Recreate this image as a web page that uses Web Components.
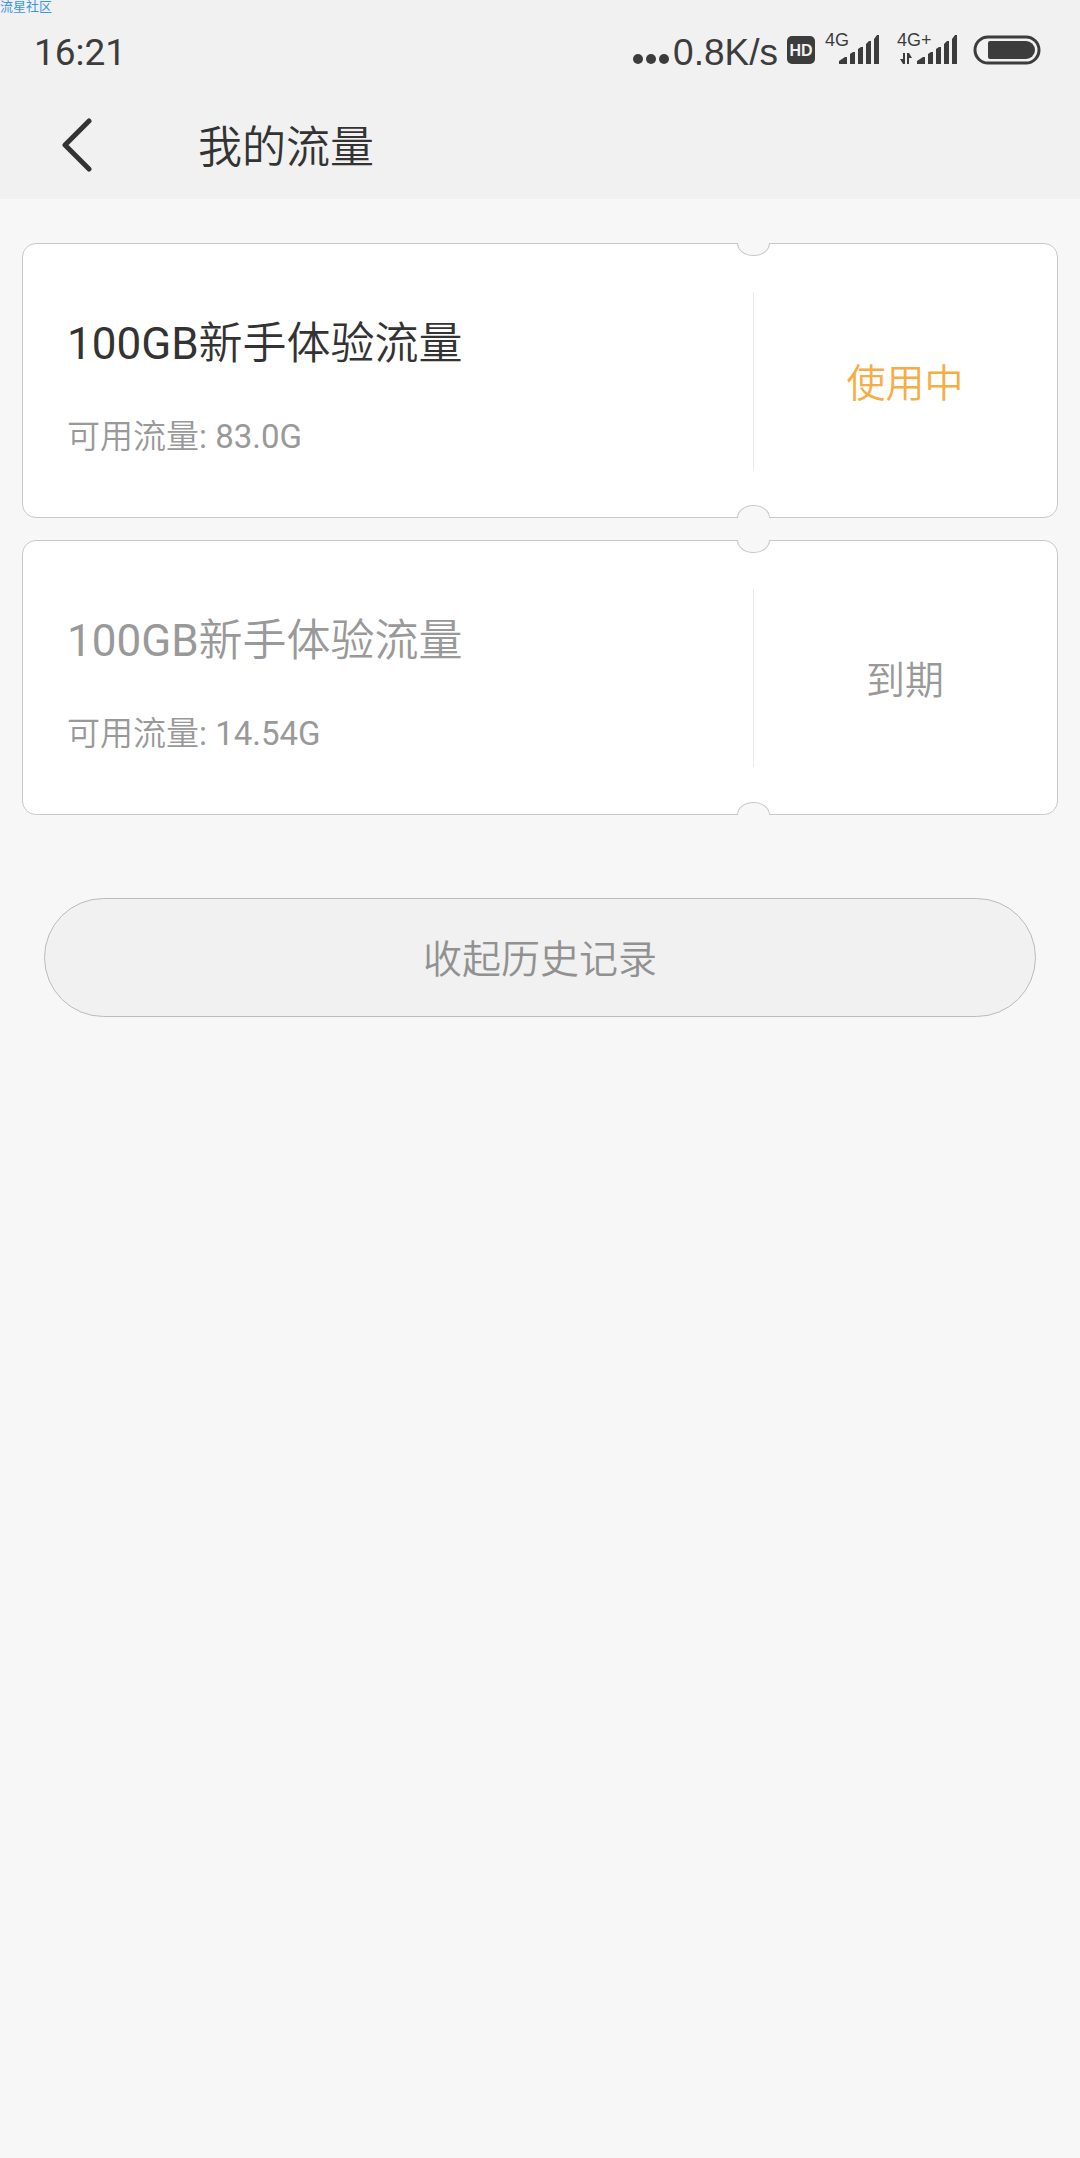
<!DOCTYPE html>
<html lang="zh-CN">
<head>
<meta charset="utf-8">
<meta name="viewport" content="width=device-width, initial-scale=1">
<title>我的流量</title>
<style>
    body {
        margin: 0;
        min-height: 100vh;
        background: #f7f7f7;
        color: #333;
        font-family: Roboto, "Noto Sans CJK SC", sans-serif;
    }
</style>
</head>
<body>
<traffic-page>
    <span slot="mark">流星社区</span>
    <status-bar slot="status" time="16:21" speed="0.8K/s"></status-bar>
    <nav-bar slot="nav">我的流量</nav-bar>
    <traffic-ticket size="100GB" amount="83.0G" state="active">新手体验流量<span slot="status">使用中</span></traffic-ticket>
    <traffic-ticket size="100GB" amount="14.54G" state="expired">新手体验流量<span slot="status">到期</span></traffic-ticket>
    <history-button slot="footer">收起历史记录</history-button>
</traffic-page>

<script>
class TrafficPage extends HTMLElement {

    constructor(){
        super();
        this.shadowObj = this.attachShadow({mode:'open'});
        this.shadowObj.innerHTML = `
            <header>
                <div class="mark"><slot name="mark"></slot></div>
                <slot name="status"></slot>
                <slot name="nav"></slot>
            </header>
            <main>
                <div class="list"><slot></slot></div>
                <slot name="footer"></slot>
            </main>
            ${this.getStyle()}
        `;
    }

    getStyle(){
        return `
        <style>
            :host {
                display: block;
                position: relative;
            }
            header {
                background: #f1f1f1;
            }
            .mark {
                position: absolute;
                top: 0;
                left: 0;
                color: #3d94e6;
                font-size: 13px;
                line-height: 13px;
            }
            main {
                padding: 44px 22px;
            }
            .list {
                display: flex;
                flex-direction: column;
                gap: 22px;
            }
        </style>
        `;
    }

}

class SignalIcon extends HTMLElement {

    constructor(){
        super();
        this.shadowObj = this.attachShadow({mode:'open'});
    }

    connectedCallback(){
        const arrows = this.hasAttribute('arrows');
        const x = arrows ? 20 : 14;
        this.shadowObj.innerHTML = `
            <svg width="${x + 41}" height="42" viewBox="0 -4 ${x + 41} 42" fill="#3c3c3c">
                <text x="0" y="13" font-size="18">${this.getAttribute('network')}</text>
                ${arrows ? '<path d="M6 20h2v11h-2l-3-5h3zM10 31h2v-6h3l-3-5h-2z"/>' : ''}
                <g transform="translate(${x} 0)">
                    <path d="M0 31v-3l6-4h2v7z"/>
                    <path d="M11 31v-10l3-2h2v12z"/>
                    <path d="M19 31v-15l3-2h2v17z"/>
                    <path d="M27 31v-20l3-3h2v23z"/>
                    <path d="M35 31v-25l3-4h2v29z"/>
                </g>
            </svg>
            <style>
                :host { display: block; }
                svg { display: block; font-family: "Liberation Sans", Arial, sans-serif; }
            </style>
        `;
    }

}

class StatusBar extends HTMLElement {

    constructor(){
        super();
        this.shadowObj = this.attachShadow({mode:'open'});
    }

    connectedCallback(){
        this.shadowObj.innerHTML = `
            <time>${this.getAttribute('time')}</time>
            <div class="icons">
                <svg class="dots" width="36" height="32" viewBox="0 0 36 32" fill="#3c3c3c">
                    <circle cx="5" cy="25" r="5"/><circle cx="18" cy="25" r="5"/><circle cx="31" cy="25" r="5"/>
                </svg>
                <span class="speed">${this.getAttribute('speed')}</span>
                <span class="hd">HD</span>
                <signal-icon class="first" network="4G"></signal-icon>
                <signal-icon class="second" network="4G+" arrows></signal-icon>
                <svg class="battery" width="68" height="30" viewBox="0 0 68 30">
                    <rect x="2" y="2" width="64" height="26" rx="13" fill="none" stroke="#3c3c3c" stroke-width="3"/>
                    <path d="M17 6h36a9 9 0 0 1 0 18H17a2 2 0 0 1-2-2V8a2 2 0 0 1 2-2z" fill="#3c3c3c"/>
                </svg>
            </div>
            ${this.getStyle()}
        `;
    }

    getStyle(){
        return `
        <style>
            :host {
                display: flex;
                justify-content: space-between;
                align-items: center;
                height: 82px;
                padding: 9px 39px 0 34px;
                color: #3c3c3c;
            }
            time {
                padding-top: 6px;
                font-size: 37px;
                line-height: 44px;
            }
            .icons {
                display: flex;
                align-items: center;
            }
            .dots {
                margin-right: 4px;
            }
            .speed {
                padding-top: 6px;
                font-family: "Liberation Sans", Arial, sans-serif;
                font-size: 37px;
                line-height: 44px;
                margin-right: 9px;
            }
            .hd {
                width: 28px;
                height: 28px;
                border-radius: 5px;
                background: #3c3c3c;
                color: #f1f1f1;
                font: bold 16px/29px "Liberation Sans", Arial, sans-serif;
                text-align: center;
            }
            .first {
                margin-left: 10px;
            }
            .second {
                margin-left: 17px;
            }
            .battery {
                margin-left: 15px;
            }
        </style>
        `;
    }

}

class NavBar extends HTMLElement {

    constructor(){
        super();
        this.shadowObj = this.attachShadow({mode:'open'});
        this.shadowObj.innerHTML = `
            <button type="button" aria-label="返回">
                <svg width="30" height="54" viewBox="0 0 30 54" fill="none" stroke="#333" stroke-width="5" stroke-linecap="round" stroke-linejoin="round">
                    <path d="M27 3 3 27 27 51"/>
                </svg>
            </button>
            <h1><slot></slot></h1>
            ${this.getStyle()}
        `;
    }

    getStyle(){
        return `
        <style>
            :host {
                display: flex;
                align-items: center;
                height: 108px;
                padding-left: 42px;
            }
            button {
                display: flex;
                padding: 0 20px;
                border: 0;
                background: none;
            }
            h1 {
                margin: 0 0 0 86px;
                padding-top: 6px;
                font-size: 44px;
                line-height: 60px;
                font-weight: 350;
            }
        </style>
        `;
    }

}

class TrafficTicket extends HTMLElement {

    constructor(){
        super();
        this.shadowObj = this.attachShadow({mode:'open'});
    }

    connectedCallback(){
        this.render();
    }

    render(){
        this.shadowObj.innerHTML = `
            <div class="info">
                <h2><span class="value">${this.getAttribute('size')}</span><slot></slot></h2>
                <p>可用流量<span class="value">: ${this.getAttribute('amount')}</span></p>
            </div>
            <div class="stub">
                <i class="notch top"></i>
                <i class="notch bottom"></i>
                <slot name="status"></slot>
            </div>
            ${this.getStyle()}
        `;
    }

    getStyle(){
        return `
        <style>
            :host {
                display: grid;
                grid-template-columns: 12fr 5fr;
                border: 1px solid #c8c8c8;
                border-radius: 14px;
                background: #fff;
                font-weight: 350;
            }
            :host([state="expired"]) h2 {
                color: #999;
            }
            :host([state="expired"]) .stub {
                color: #999;
            }
            .info {
                padding: 70px 44px 58px;
            }
            h2 {
                margin: 0;
                font-size: 44px;
                line-height: 60px;
                font-weight: inherit;
            }
            p {
                margin: 41px 0 0;
                color: #999;
                font-size: 33px;
                line-height: 44px;
            }
            .value {
                font-weight: 400;
            }
            .stub {
                position: relative;
                display: flex;
                align-items: center;
                justify-content: center;
                padding-top: 6px;
                color: #f5ad45;
                font-size: 39px;
                line-height: 56px;
                background: linear-gradient(#eaeaea, #eaeaea) left center / 1px 178px no-repeat;
            }
            /* half circles punched out of the edges where the stub tears off */
            .notch {
                position: absolute;
                left: -16px;
                box-sizing: border-box;
                width: 33px;
                height: 13px;
                border: 1px solid #c8c8c8;
                background: #f7f7f7;
            }
            .top {
                top: -1px;
                border-top: 0;
                border-radius: 0 0 16px 16px / 0 0 13px 13px;
            }
            .bottom {
                bottom: -1px;
                border-bottom: 0;
                border-radius: 16px 16px 0 0 / 13px 13px 0 0;
            }
        </style>
        `;
    }

}

class HistoryButton extends HTMLElement {

    constructor(){
        super();
        this.shadowObj = this.attachShadow({mode:'open'});
        this.shadowObj.innerHTML = `
            <button type="button"><slot></slot></button>
            <style>
                :host {
                    display: block;
                    padding: 0 22px;
                    margin-top: 83px;
                }
                button {
                    display: block;
                    width: 100%;
                    padding: 33px 28px 27px;
                    border: 1px solid #bbb;
                    border-radius: 60px;
                    background: #f1f1f1;
                    color: #919191;
                    font-family: inherit;
                    font-size: 39px;
                    line-height: 57px;
                    font-weight: 350;
                }
            </style>
        `;
    }

}

customElements.define('signal-icon',SignalIcon);
customElements.define('status-bar',StatusBar);
customElements.define('nav-bar',NavBar);
customElements.define('traffic-ticket',TrafficTicket);
customElements.define('history-button',HistoryButton);
customElements.define('traffic-page',TrafficPage);
</script>
</body>
</html>
